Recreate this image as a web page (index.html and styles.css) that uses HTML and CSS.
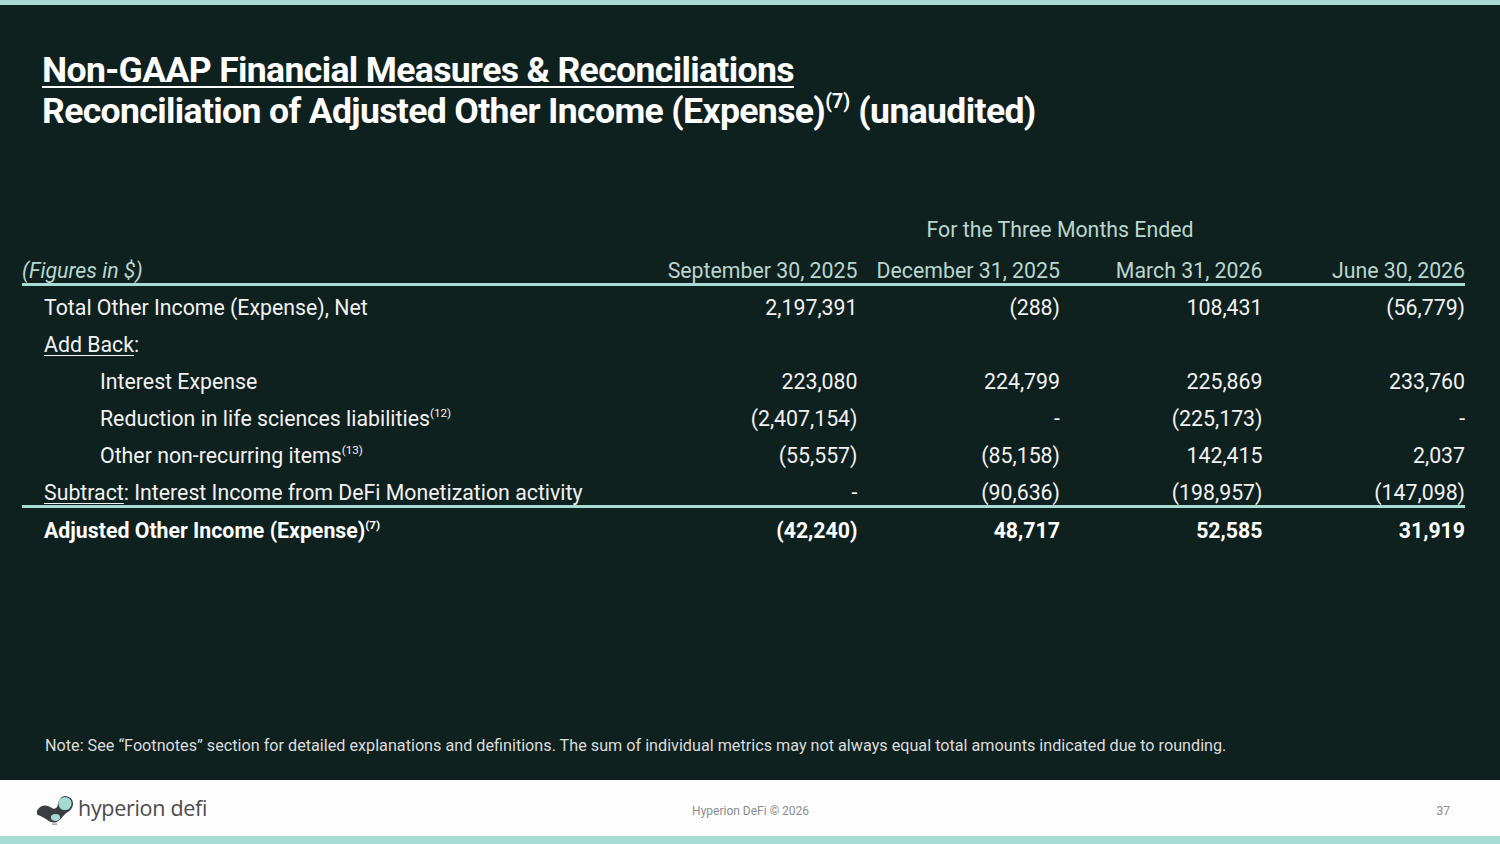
FILE: index.html
```html
<!DOCTYPE html>
<html lang="en">
<head>
<meta charset="utf-8">
<title>Non-GAAP Financial Measures &amp; Reconciliations</title>
<link rel="stylesheet" href="styles.css">
</head>
<body>
<div class="slide">
  <div class="top-bar"></div>
  <main class="main">
    <header class="titles">
      <h1 class="title-1">Non-GAAP Financial Measures &amp; Reconciliations</h1>
      <h2 class="title-2">Reconciliation of Adjusted Other Income (Expense)<sup>(7)</sup> (unaudited)</h2>
    </header>

    <table class="recon">
      <colgroup>
        <col class="c-label">
        <col class="c-val">
        <col class="c-val">
        <col class="c-val">
        <col class="c-val">
      </colgroup>
      <thead>
        <tr class="r-period">
          <th></th>
          <th colspan="4" class="period">For the Three Months Ended</th>
        </tr>
        <tr class="r-head">
          <th class="figs">(Figures in $)</th>
          <th class="num">September 30, 2025</th>
          <th class="num">December 31, 2025</th>
          <th class="num">March 31, 2026</th>
          <th class="num">June 30, 2026</th>
        </tr>
      </thead>
      <tbody>
        <tr class="r-first">
          <td class="lbl">Total Other Income (Expense), Net</td>
          <td class="num">2,197,391</td>
          <td class="num">(288)</td>
          <td class="num">108,431</td>
          <td class="num">(56,779)</td>
        </tr>
        <tr>
          <td class="lbl"><u>Add Back</u>:</td>
          <td class="num"></td>
          <td class="num"></td>
          <td class="num"></td>
          <td class="num"></td>
        </tr>
        <tr>
          <td class="lbl ind">Interest Expense</td>
          <td class="num">223,080</td>
          <td class="num">224,799</td>
          <td class="num">225,869</td>
          <td class="num">233,760</td>
        </tr>
        <tr>
          <td class="lbl ind">Reduction in life sciences liabilities<sup>(12)</sup></td>
          <td class="num">(2,407,154)</td>
          <td class="num">-</td>
          <td class="num">(225,173)</td>
          <td class="num">-</td>
        </tr>
        <tr>
          <td class="lbl ind">Other non-recurring items<sup>(13)</sup></td>
          <td class="num">(55,557)</td>
          <td class="num">(85,158)</td>
          <td class="num">142,415</td>
          <td class="num">2,037</td>
        </tr>
        <tr class="r-last">
          <td class="lbl"><u>Subtract</u>: Interest Income from DeFi Monetization activity</td>
          <td class="num">-</td>
          <td class="num">(90,636)</td>
          <td class="num">(198,957)</td>
          <td class="num">(147,098)</td>
        </tr>
      </tbody>
      <tfoot>
        <tr class="r-total">
          <td class="lbl">Adjusted Other Income (Expense)<sup>(7)</sup></td>
          <td class="num">(42,240)</td>
          <td class="num">48,717</td>
          <td class="num">52,585</td>
          <td class="num">31,919</td>
        </tr>
      </tfoot>
    </table>

    <p class="note">Note: See “Footnotes” section for detailed explanations and definitions. The sum of individual metrics may not always equal total amounts indicated due to rounding.</p>
  </main>
  <footer class="footer">
    <div class="logo">
      <svg class="logo-mark" viewBox="0 0 46 34" width="46" height="34" aria-hidden="true">
        <path d="M3 19 C6 13 12 12 17 15.5 C20 17.5 22 17 23.5 14 C24.5 8 27 4 31 4 C36 4 39.5 8 39 12.5 C38.5 16.5 36 19 33 20.5 C29 23 27 29 21 30.5 C15.5 31.5 12 25.5 3 22.5 Z" fill="#3b3e40"/>
        <circle cx="31" cy="11.5" r="6.6" fill="#a3dbd2"/>
        <ellipse cx="21.5" cy="25.5" rx="4.6" ry="3.4" fill="#a3dbd2"/>
        <rect x="18" y="31.5" width="5" height="1.3" fill="#9a9a9a"/>
      </svg>
      <span class="logo-text">hyperion defi</span>
    </div>
    <span class="copy">Hyperion DeFi © 2026</span>
    <span class="page">37</span>
  </footer>
  <div class="bottom-bar"></div>
</div>
</body>
</html>
```
FILE: styles.css
```css
* { box-sizing: border-box; }
html, body { margin: 0; padding: 0; }
body {
  width: 1500px;
  height: 844px;
  overflow: hidden;
  font-family: Roboto, "Liberation Sans", sans-serif;
  background: #0f211f;
}
.slide {
  width: 1500px;
  height: 844px;
  display: flex;
  flex-direction: column;
}
.top-bar { height: 5px; background: #a6dcd3; flex: none; }
.bottom-bar { height: 8px; background: #a6dcd3; flex: none; }

.main {
  flex: 1;
  background: #0f211f;
  padding: 45px 35px 0 22px;
  display: flex;
  flex-direction: column;
  color: #f2f2f2;
}

.titles { padding-left: 20px; }
.title-1, .title-2 {
  margin: 0;
  font-size: 35.6px;
  line-height: 41px;
  font-weight: 700;
  color: #ffffff;
  letter-spacing: -0.65px;
}
.title-1 {
  text-decoration: underline;
  text-decoration-thickness: 2px;
  text-underline-offset: 4px;
}
.title-2 sup, .lbl sup {
  font-size: 0.55em;
  line-height: 0;
  vertical-align: 0;
  position: relative;
  top: -0.75em;
  letter-spacing: 0;
}

.recon {
  margin-top: 86px;
  width: 1443px;
  border-collapse: collapse;
  table-layout: fixed;
  font-size: 21.3px;
}
.c-label { width: 633px; }
.c-val { width: 202.5px; }

.recon th, .recon td {
  padding: 0;
  line-height: 24px;
  white-space: nowrap;
}
.recon th { font-weight: 400; color: #b9d6cf; }
.period { text-align: center; }
.r-head th { padding-top: 17px; border-bottom: 3px solid #a6dcd3; }
.figs { text-align: left; font-style: italic; }
.num { text-align: right; }

.recon tbody td { padding-top: 6.5px; padding-bottom: 6.5px; color: #f2f2f2; }
.recon tbody .r-first td { padding-top: 10px; }
.recon tbody .r-last td { padding-bottom: 0; border-bottom: 3px solid #a6dcd3; }
.lbl { padding-left: 22px !important; }
.lbl.ind { padding-left: 78px !important; }
.lbl u { text-underline-offset: 3px; text-decoration-thickness: 1px; }

.r-total td { padding-top: 10.5px; font-weight: 700; color: #ffffff; }
.r-total sup { font-weight: 700; }

.note {
  margin: auto 0 24px 23px;
  font-size: 16.2px;
  line-height: 20px;
  color: #dcdcdc;
}

.footer {
  height: 56px;
  flex: none;
  background: #fdfdfd;
  display: flex;
  align-items: center;
  padding: 0 50px 0 34px;
}
.logo { display: flex; align-items: center; margin-top: -2px; flex: none; }
.logo-mark { display: block; flex: none; margin-top: 3px; }
.logo-text {
  font-family: "Open Sans", sans-serif;
  font-size: 21.5px;
  color: #4b4b4b;
  letter-spacing: -0.3px;
  margin-left: -2px;
  white-space: nowrap;
}
.copy {
  margin-left: 485px;
  font-size: 12px;
  color: #8c8c8c;
  margin-top: 6px;
  white-space: nowrap;
}
.page { margin-left: auto; font-size: 12px; color: #8c8c8c; margin-top: 6px; }
```
